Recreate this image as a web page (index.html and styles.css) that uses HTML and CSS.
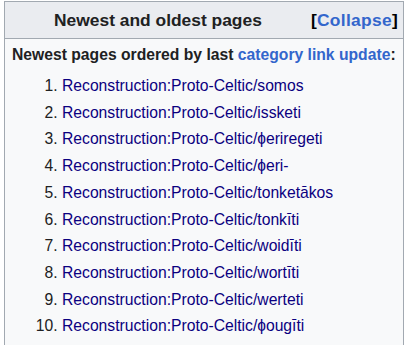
FILE: index.html
```html
<!DOCTYPE html>
<html>
<head>
<meta charset="utf-8">
<link rel="stylesheet" href="styles.css">
</head>
<body>
<div class="box">
  <div class="head">
    <div class="title">Newest and oldest pages</div>
    <div class="toggle">[<a href="#">Collapse</a>]</div>
  </div>
  <div class="content">
    <div class="sub">Newest pages ordered by last <a href="#">category link update</a>:</div>
    <ol class="list">
      <li><a href="#">Reconstruction:Proto-Celtic/somos</a></li>
      <li><a href="#">Reconstruction:Proto-Celtic/issketi</a></li>
      <li><a href="#">Reconstruction:Proto-Celtic/ɸeriregeti</a></li>
      <li><a href="#">Reconstruction:Proto-Celtic/ɸeri-</a></li>
      <li><a href="#">Reconstruction:Proto-Celtic/tonketākos</a></li>
      <li><a href="#">Reconstruction:Proto-Celtic/tonkīti</a></li>
      <li><a href="#">Reconstruction:Proto-Celtic/woidīti</a></li>
      <li><a href="#">Reconstruction:Proto-Celtic/wortīti</a></li>
      <li><a href="#">Reconstruction:Proto-Celtic/werteti</a></li>
      <li><a href="#">Reconstruction:Proto-Celtic/ɸougīti</a></li>
    </ol>
  </div>
</div>
</body>
</html>
```
FILE: styles.css
```css
html, body {
  margin: 0;
  padding: 0;
  background: #ffffff;
}
body {
  padding: 1px 0 0 4px;
  font-family: "Liberation Sans", Arial, sans-serif;
  font-size: 15.7px;
  color: #202122;
}
a {
  text-decoration: none;
}
.box {
  box-sizing: border-box;
  width: 400px;
  border: 1px solid #a2a9b1;
  background: #f8f9fa;
}
.head {
  display: flex;
  align-items: center;
  height: 36px;
  background: #eaecf0;
  border-bottom: 1px solid #a2a9b1;
}
.title {
  flex: 1;
  text-align: center;
  font-weight: bold;
  font-size: 17.4px;
}
.toggle {
  font-weight: bold;
  font-size: 17.4px;
  letter-spacing: 0.3px;
  padding-right: 5px;
  color: #000;
}
.toggle a {
  color: #3366cc;
}
.content {
  padding: 7px 7px 10px 7px;
}
.sub {
  font-weight: bold;
}
.sub a {
  color: #3366cc;
}
.list {
  margin: 9px 0 0 0;
  padding-left: 50px;
}
.list li {
  line-height: 26.7px;
}
.list a {
  color: #0b0080;
}
```
